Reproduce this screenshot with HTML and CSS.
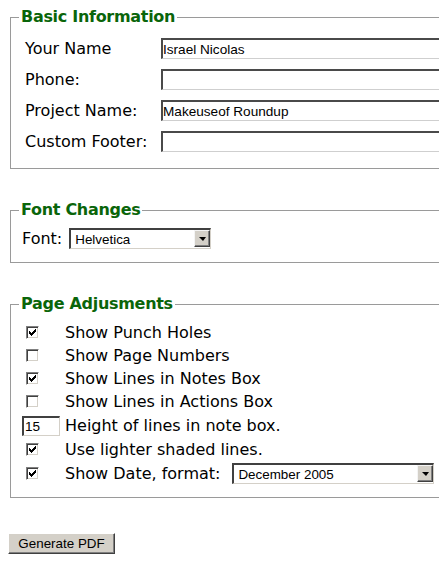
FILE: index.html
```html
<!DOCTYPE html>
<html>
<head>
<meta charset="utf-8">
<link rel="stylesheet" href="styles.css">
</head>
<body>
<form class="page">
  <fieldset class="group group-basic">
    <legend>Basic Information</legend>
    <div class="fields">
      <label class="lbl" for="name">Your Name</label>
      <input class="txt" id="name" type="text" value="Israel Nicolas">
      <label class="lbl" for="phone">Phone:</label>
      <input class="txt" id="phone" type="text" value="">
      <label class="lbl" for="proj">Project Name:</label>
      <input class="txt" id="proj" type="text" value="Makeuseof Roundup">
      <label class="lbl" for="foot">Custom Footer:</label>
      <input class="txt" id="foot" type="text" value="">
    </div>
  </fieldset>

  <fieldset class="group group-font">
    <legend>Font Changes</legend>
    <div class="font-row">
      <label class="lbl" for="font">Font:</label>
      <span class="sel sel-font">
        <select id="font"><option>Helvetica</option></select>
        <span class="arrow"></span>
      </span>
    </div>
  </fieldset>

  <fieldset class="group group-page">
    <legend>Page Adjusments</legend>
    <div class="row">
      <span class="cell"><span class="cb"><svg viewBox="0 0 9 9" width="9" height="9"><path d="M1 3H2V4H3V5H4V4H5V3H6V2H7V1H8V4H7V5H6V6H5V7H4V8H3V7H2V6H1Z"/></svg></span></span>
      <span>Show Punch Holes</span>
    </div>
    <div class="row">
      <span class="cell"><span class="cb"></span></span>
      <span>Show Page Numbers</span>
    </div>
    <div class="row">
      <span class="cell"><span class="cb"><svg viewBox="0 0 9 9" width="9" height="9"><path d="M1 3H2V4H3V5H4V4H5V3H6V2H7V1H8V4H7V5H6V6H5V7H4V8H3V7H2V6H1Z"/></svg></span></span>
      <span>Show Lines in Notes Box</span>
    </div>
    <div class="row">
      <span class="cell"><span class="cb"></span></span>
      <span>Show Lines in Actions Box</span>
    </div>
    <div class="row row-tall">
      <span class="cell"><input class="txt num" type="text" value="15"></span>
      <span>Height of lines in note box.</span>
    </div>
    <div class="row">
      <span class="cell"><span class="cb"><svg viewBox="0 0 9 9" width="9" height="9"><path d="M1 3H2V4H3V5H4V4H5V3H6V2H7V1H8V4H7V5H6V6H5V7H4V8H3V7H2V6H1Z"/></svg></span></span>
      <span>Use lighter shaded lines.</span>
    </div>
    <div class="row row-tall">
      <span class="cell"><span class="cb"><svg viewBox="0 0 9 9" width="9" height="9"><path d="M1 3H2V4H3V5H4V4H5V3H6V2H7V1H8V4H7V5H6V6H5V7H4V8H3V7H2V6H1Z"/></svg></span></span>
      <span>Show Date, format:</span>
      <span class="sel sel-date">
        <select><option>December 2005</option></select>
        <span class="arrow"></span>
      </span>
    </div>
  </fieldset>

  <button class="btn" type="button">Generate PDF</button>
</form>
</body>
</html>
```
FILE: styles.css
```css
html {
  background: #fff;
}

body {
  margin: 8px 0 8px 8px;
  font-family: "DejaVu Sans", Verdana, sans-serif;
  font-size: 16px;
  color: #000;
}

.page {
  margin: 0;
  overflow: hidden;
}

.group {
  width: 640px;
  margin: 0 2px 32px;
  padding: 12px 11px 16px;
  border: 1px solid #9a9a9a;
  min-width: 0;
}

.group legend {
  font-weight: bold;
  color: #0a650a;
  padding: 0 2px;
  margin-left: -3px;
  line-height: 18px;
  letter-spacing: -0.3px;
}

.group-font {
  padding-top: 9px;
  padding-bottom: 13px;
}

.group-page {
  padding-top: 8px;
  padding-bottom: 11px;
  margin-bottom: 35px;
}

.fields {
  display: grid;
  grid-template-columns: 126px 300px;
  column-gap: 10px;
  row-gap: 10px;
  align-items: center;
  margin-left: 3px;
}

.lbl {
  line-height: 19px;
  white-space: nowrap;
}

.txt {
  box-sizing: border-box;
  height: 21px;
  margin: 0;
  padding: 0 1px 0 0;
  font-family: "Liberation Sans", Arial, sans-serif;
  font-size: 13.6px;
  color: #000;
  background: #fff;
  border-style: solid;
  border-width: 2px 1px 1px 2px;
  border-color: #4a4a4a #cfcfcf #cfcfcf #4a4a4a;
  outline: none;
}

.font-row {
  display: flex;
  align-items: center;
  gap: 7px;
}

.sel {
  position: relative;
  display: inline-block;
  height: 21px;
  box-sizing: border-box;
}

.sel-font {
  width: 142px;
}

.sel-date {
  width: 202px;
  margin-left: 12px;
}

.sel select {
  -webkit-appearance: none;
  appearance: none;
  display: block;
  box-sizing: border-box;
  width: 100%;
  height: 100%;
  margin: 0;
  padding: 0 0 0 4px;
  font-family: "Liberation Sans", Arial, sans-serif;
  font-size: 13.4px;
  color: #000;
  background: #fff;
  border-style: solid;
  border-width: 2px 1px 1px 2px;
  border-color: #404040 #d4d0c8 #d4d0c8 #404040;
  border-radius: 0;
  outline: none;
}

.arrow {
  position: absolute;
  right: 1px;
  top: 2px;
  width: 16px;
  height: 17px;
  box-sizing: border-box;
  background: #d4d0c8;
  border-style: solid;
  border-width: 1px;
  border-color: #f4f4f4 #404040 #404040 #f4f4f4;
  box-shadow: inset -1px -1px #808080;
  display: flex;
  align-items: center;
  justify-content: center;
  pointer-events: none;
}

.arrow::before {
  content: "";
  width: 0;
  height: 0;
  border-left: 4px solid transparent;
  border-right: 3px solid transparent;
  border-top: 4px solid #000;
  margin-top: 1px;
}

.row {
  display: flex;
  align-items: center;
  height: 23px;
  line-height: 19px;
  white-space: nowrap;
}

.row-tall {
  height: 25px;
}

.cell {
  flex: none;
  width: 43px;
  display: flex;
  align-items: center;
}

.cb {
  box-sizing: border-box;
  width: 13px;
  height: 13px;
  margin-left: 4px;
  background: #fff;
  border-style: solid;
  border-width: 1px;
  border-color: #808080 #ffffff #ffffff #808080;
  box-shadow: inset 1px 1px #404040, inset -1px -1px #d4d0c8;
  display: flex;
  align-items: center;
  justify-content: center;
}

.cb svg {
  display: block;
  fill: #000;
  shape-rendering: crispEdges;
}

.num {
  width: 38px;
  height: 20px;
  padding-left: 1px;
  border-color: #404040 #d4d0c8 #d4d0c8 #404040;
}

.btn {
  display: block;
  box-sizing: border-box;
  width: 107px;
  height: 21px;
  margin: 0;
  padding: 0;
  font-family: "Liberation Sans", Arial, sans-serif;
  font-size: 13.4px;
  color: #000;
  background: #d4d0c8;
  border-style: solid;
  border-width: 1px;
  border-color: #ffffff #404040 #404040 #ffffff;
  box-shadow: inset -1px -1px #808080;
}
```
